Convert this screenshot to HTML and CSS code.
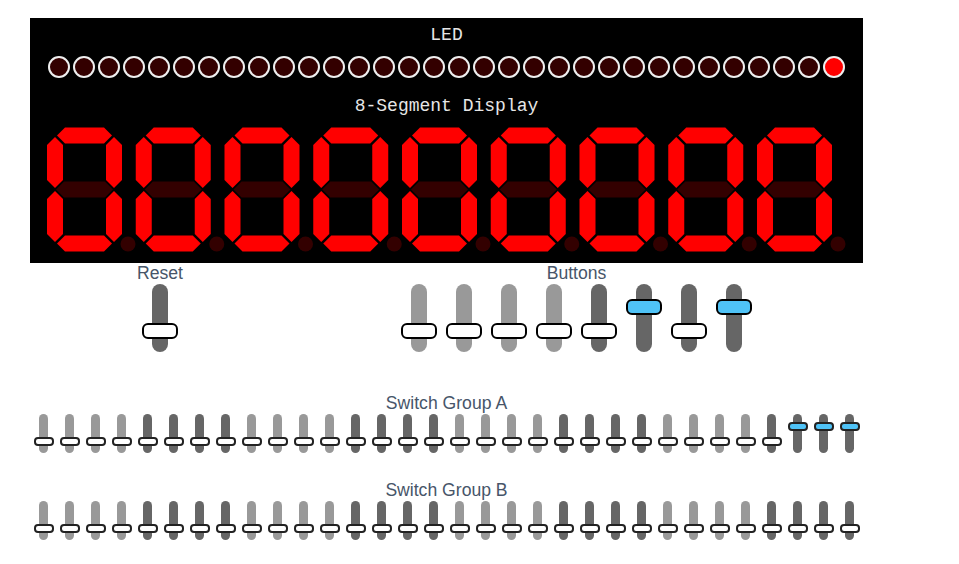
FILE: index.html
```html
<!DOCTYPE html>
<html lang="en">
<head>
<meta charset="utf-8">
<title>Board</title>
<link rel="stylesheet" href="styles.css">
</head>
<body>
<div class="board">
  <section class="display">
    <div class="display-title">LED</div>
    <div class="leds">
      <span class="led"></span><span class="led"></span><span class="led"></span><span class="led"></span>
      <span class="led"></span><span class="led"></span><span class="led"></span><span class="led"></span>
      <span class="led"></span><span class="led"></span><span class="led"></span><span class="led"></span>
      <span class="led"></span><span class="led"></span><span class="led"></span><span class="led"></span>
      <span class="led"></span><span class="led"></span><span class="led"></span><span class="led"></span>
      <span class="led"></span><span class="led"></span><span class="led"></span><span class="led"></span>
      <span class="led"></span><span class="led"></span><span class="led"></span><span class="led"></span>
      <span class="led"></span><span class="led"></span><span class="led"></span><span class="led on"></span>
    </div>
    <div class="display-title seg-title">8-Segment Display</div>
    <svg class="segments" width="799" height="126" viewBox="0 0 799 126">
      <defs>
        <g id="digit">
          <polygon class="seg-on" points="10,8.5 18,0.5 57,0.5 65,8.5 57,16.5 18,16.5"/>
          <polygon class="seg-on" points="67,10 75,18 75,53 67,61 59,53 59,18"/>
          <polygon class="seg-on" points="67,64 75,72 75,107 67,115 59,107 59,72"/>
          <polygon class="seg-on" points="10,116.5 18,108.5 57,108.5 65,116.5 57,124.5 18,124.5"/>
          <polygon class="seg-on" points="8,64 16,72 16,107 8,115 0,107 0,72"/>
          <polygon class="seg-on" points="8,10 16,18 16,53 8,61 0,53 0,18"/>
          <polygon class="seg-off" points="9,62.5 17,54.5 58,54.5 66,62.5 58,70.5 17,70.5"/>
          <circle class="seg-off" cx="81" cy="117" r="7.5"/>
        </g>
      </defs>
      <use href="#digit" x="0"/>
      <use href="#digit" x="88.75"/>
      <use href="#digit" x="177.5"/>
      <use href="#digit" x="266.25"/>
      <use href="#digit" x="355"/>
      <use href="#digit" x="443.75"/>
      <use href="#digit" x="532.5"/>
      <use href="#digit" x="621.25"/>
      <use href="#digit" x="710"/>
    </svg>
  </section>

  <div class="controls">
    <div class="group reset">
      <div class="label">Reset</div>
      <div class="switches">
        <div class="switch"><div class="track dark"></div><div class="handle"></div></div>
      </div>
    </div>
    <div class="group buttons">
      <div class="label">Buttons</div>
      <div class="switches">
        <div class="switch"><div class="track"></div><div class="handle"></div></div>
        <div class="switch"><div class="track"></div><div class="handle"></div></div>
        <div class="switch"><div class="track"></div><div class="handle"></div></div>
        <div class="switch"><div class="track"></div><div class="handle"></div></div>
        <div class="switch"><div class="track dark"></div><div class="handle"></div></div>
        <div class="switch"><div class="track dark"></div><div class="handle up"></div></div>
        <div class="switch"><div class="track dark"></div><div class="handle"></div></div>
        <div class="switch"><div class="track dark"></div><div class="handle up"></div></div>
      </div>
    </div>
  </div>

  <div class="bank bank-a">
    <div class="label">Switch Group A</div>
    <div class="sws">
      <div class="sw"><div class="sw-track"></div><div class="sw-handle"></div></div>
      <div class="sw"><div class="sw-track"></div><div class="sw-handle"></div></div>
      <div class="sw"><div class="sw-track"></div><div class="sw-handle"></div></div>
      <div class="sw"><div class="sw-track"></div><div class="sw-handle"></div></div>
      <div class="sw"><div class="sw-track dark"></div><div class="sw-handle"></div></div>
      <div class="sw"><div class="sw-track dark"></div><div class="sw-handle"></div></div>
      <div class="sw"><div class="sw-track dark"></div><div class="sw-handle"></div></div>
      <div class="sw"><div class="sw-track dark"></div><div class="sw-handle"></div></div>
      <div class="sw"><div class="sw-track"></div><div class="sw-handle"></div></div>
      <div class="sw"><div class="sw-track"></div><div class="sw-handle"></div></div>
      <div class="sw"><div class="sw-track"></div><div class="sw-handle"></div></div>
      <div class="sw"><div class="sw-track"></div><div class="sw-handle"></div></div>
      <div class="sw"><div class="sw-track dark"></div><div class="sw-handle"></div></div>
      <div class="sw"><div class="sw-track dark"></div><div class="sw-handle"></div></div>
      <div class="sw"><div class="sw-track dark"></div><div class="sw-handle"></div></div>
      <div class="sw"><div class="sw-track dark"></div><div class="sw-handle"></div></div>
      <div class="sw"><div class="sw-track"></div><div class="sw-handle"></div></div>
      <div class="sw"><div class="sw-track"></div><div class="sw-handle"></div></div>
      <div class="sw"><div class="sw-track"></div><div class="sw-handle"></div></div>
      <div class="sw"><div class="sw-track"></div><div class="sw-handle"></div></div>
      <div class="sw"><div class="sw-track dark"></div><div class="sw-handle"></div></div>
      <div class="sw"><div class="sw-track dark"></div><div class="sw-handle"></div></div>
      <div class="sw"><div class="sw-track dark"></div><div class="sw-handle"></div></div>
      <div class="sw"><div class="sw-track dark"></div><div class="sw-handle"></div></div>
      <div class="sw"><div class="sw-track"></div><div class="sw-handle"></div></div>
      <div class="sw"><div class="sw-track"></div><div class="sw-handle"></div></div>
      <div class="sw"><div class="sw-track"></div><div class="sw-handle"></div></div>
      <div class="sw"><div class="sw-track"></div><div class="sw-handle"></div></div>
      <div class="sw"><div class="sw-track dark"></div><div class="sw-handle"></div></div>
      <div class="sw"><div class="sw-track dark"></div><div class="sw-handle up"></div></div>
      <div class="sw"><div class="sw-track dark"></div><div class="sw-handle up"></div></div>
      <div class="sw"><div class="sw-track dark"></div><div class="sw-handle up"></div></div>
    </div>
  </div>

  <div class="bank bank-b">
    <div class="label">Switch Group B</div>
    <div class="sws">
      <div class="sw"><div class="sw-track"></div><div class="sw-handle"></div></div>
      <div class="sw"><div class="sw-track"></div><div class="sw-handle"></div></div>
      <div class="sw"><div class="sw-track"></div><div class="sw-handle"></div></div>
      <div class="sw"><div class="sw-track"></div><div class="sw-handle"></div></div>
      <div class="sw"><div class="sw-track dark"></div><div class="sw-handle"></div></div>
      <div class="sw"><div class="sw-track dark"></div><div class="sw-handle"></div></div>
      <div class="sw"><div class="sw-track dark"></div><div class="sw-handle"></div></div>
      <div class="sw"><div class="sw-track dark"></div><div class="sw-handle"></div></div>
      <div class="sw"><div class="sw-track"></div><div class="sw-handle"></div></div>
      <div class="sw"><div class="sw-track"></div><div class="sw-handle"></div></div>
      <div class="sw"><div class="sw-track"></div><div class="sw-handle"></div></div>
      <div class="sw"><div class="sw-track"></div><div class="sw-handle"></div></div>
      <div class="sw"><div class="sw-track dark"></div><div class="sw-handle"></div></div>
      <div class="sw"><div class="sw-track dark"></div><div class="sw-handle"></div></div>
      <div class="sw"><div class="sw-track dark"></div><div class="sw-handle"></div></div>
      <div class="sw"><div class="sw-track dark"></div><div class="sw-handle"></div></div>
      <div class="sw"><div class="sw-track"></div><div class="sw-handle"></div></div>
      <div class="sw"><div class="sw-track"></div><div class="sw-handle"></div></div>
      <div class="sw"><div class="sw-track"></div><div class="sw-handle"></div></div>
      <div class="sw"><div class="sw-track"></div><div class="sw-handle"></div></div>
      <div class="sw"><div class="sw-track dark"></div><div class="sw-handle"></div></div>
      <div class="sw"><div class="sw-track dark"></div><div class="sw-handle"></div></div>
      <div class="sw"><div class="sw-track dark"></div><div class="sw-handle"></div></div>
      <div class="sw"><div class="sw-track dark"></div><div class="sw-handle"></div></div>
      <div class="sw"><div class="sw-track"></div><div class="sw-handle"></div></div>
      <div class="sw"><div class="sw-track"></div><div class="sw-handle"></div></div>
      <div class="sw"><div class="sw-track"></div><div class="sw-handle"></div></div>
      <div class="sw"><div class="sw-track"></div><div class="sw-handle"></div></div>
      <div class="sw"><div class="sw-track dark"></div><div class="sw-handle"></div></div>
      <div class="sw"><div class="sw-track dark"></div><div class="sw-handle"></div></div>
      <div class="sw"><div class="sw-track dark"></div><div class="sw-handle"></div></div>
      <div class="sw"><div class="sw-track dark"></div><div class="sw-handle"></div></div>
    </div>
  </div>
</div>
</body>
</html>
```

FILE: styles.css
```css
body {
  margin: 0;
  background: #ffffff;
  font-family: "Liberation Sans", Arial, sans-serif;
}

.board {
  width: 833px;
  margin: 18px 0 0 30px;
}

/* ---------- black display panel ---------- */
.display {
  background: #000000;
  padding: 7px 0 10px;
  display: flex;
  flex-direction: column;
  align-items: center;
}

.display-title {
  font-family: "Liberation Mono", "Courier New", monospace;
  font-size: 18px;
  line-height: 20px;
  color: #e6e6e6;
}

.seg-title {
  margin-top: 18px;
}

.leds {
  display: flex;
  gap: 3px;
  margin-top: 11px;
}

.led {
  width: 22px;
  height: 22px;
  box-sizing: border-box;
  border: 2px solid #eeeeee;
  border-radius: 50%;
  background: #330000;
}

.led.on {
  background: #ff0000;
}

.segments {
  display: block;
  margin-top: 11px;
}

.seg-on {
  fill: #ff0000;
}

.seg-off {
  fill: #330000;
}

/* ---------- labels ---------- */
.label {
  font-size: 17.6px;
  line-height: 20px;
  color: #475569;
  text-align: center;
}

/* ---------- reset + buttons ---------- */
.controls {
  display: flex;
}

.group {
  display: flex;
  flex-direction: column;
  align-items: center;
}

.group.reset {
  width: 260px;
}

.group.buttons {
  flex: 1;
}

.switches {
  display: flex;
  gap: 9px;
  margin-top: 1px;
}

.switch {
  position: relative;
  width: 36px;
  height: 68px;
  display: flex;
  justify-content: center;
}

.track {
  width: 16px;
  height: 100%;
  border-radius: 8px;
  background: #999999;
}

.track.dark {
  background: #666666;
}

.handle {
  position: absolute;
  left: 0;
  top: 39px;
  width: 36px;
  height: 16px;
  box-sizing: border-box;
  border: 2.5px solid #000000;
  border-radius: 6px;
  background: #ffffff;
}

.handle.up {
  top: 15px;
  background: #4fc3f7;
}

/* ---------- switch banks ---------- */
.bank {
  display: flex;
  flex-direction: column;
  align-items: center;
}

.bank-a {
  margin-top: 41px;
}

.bank-b {
  margin-top: 27px;
}

.sws {
  display: flex;
  gap: 6px;
  margin-top: 1px;
}

.sw {
  position: relative;
  width: 20px;
  height: 39px;
  display: flex;
  justify-content: center;
}

.sw-track {
  width: 9px;
  height: 100%;
  border-radius: 4.5px;
  background: #999999;
}

.sw-track.dark {
  background: #666666;
}

.sw-handle {
  position: absolute;
  left: 0;
  top: 22.5px;
  width: 20px;
  height: 9px;
  box-sizing: border-box;
  border: 2px solid #222222;
  border-radius: 4px;
  background: #ffffff;
}

.sw-handle.up {
  top: 8px;
  background: #4fc3f7;
}
```
